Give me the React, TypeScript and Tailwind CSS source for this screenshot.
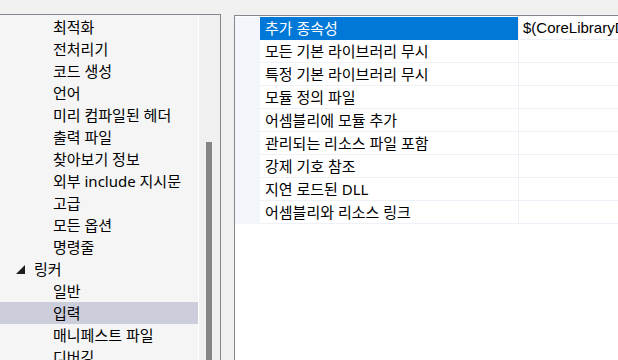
const TREE_ITEMS = [
  { label: "최적화", level: 2 },
  { label: "전처리기", level: 2 },
  { label: "코드 생성", level: 2 },
  { label: "언어", level: 2 },
  { label: "미리 컴파일된 헤더", level: 2 },
  { label: "출력 파일", level: 2 },
  { label: "찾아보기 정보", level: 2 },
  { label: "외부 include 지시문", level: 2 },
  { label: "고급", level: 2 },
  { label: "모든 옵션", level: 2 },
  { label: "명령줄", level: 2 },
  { label: "링커", level: 1 },
  { label: "일반", level: 2 },
  { label: "입력", level: 2, selected: true },
  { label: "매니페스트 파일", level: 2 },
  { label: "디버깅", level: 2 },
];

const PROPS = [
  { name: "추가 종속성", value: "$(CoreLibraryDependencies);%(AdditionalDependencies)" },
  { name: "모든 기본 라이브러리 무시", value: "" },
  { name: "특정 기본 라이브러리 무시", value: "" },
  { name: "모듈 정의 파일", value: "" },
  { name: "어셈블리에 모듈 추가", value: "" },
  { name: "관리되는 리소스 파일 포함", value: "" },
  { name: "강제 기호 참조", value: "" },
  { name: "지연 로드된 DLL", value: "" },
  { name: "어셈블리와 리소스 링크", value: "" },
];

const FONT = { fontFamily: '"Noto Sans", "Noto Sans CJK KR", sans-serif' };

export default function App() {
  return (
    <div
      className="w-[618px] h-[360px] overflow-hidden bg-[#f0f0f0] flex items-start pt-[14px] text-[15px] text-black"
      style={FONT}
    >
      {/* Tree panel */}
      <div className="w-[221px] h-[400px] shrink-0 flex bg-[#f5f5f5] border-t border-r border-[#828790]">
        <div className="w-[198px] pt-[1px]">
          {TREE_ITEMS.map((item) => (
            <div
              key={item.label}
              className={`h-[22px] flex items-center whitespace-nowrap ${item.selected ? "bg-[#cccedb]" : ""} ${item.level === 1 ? "pl-[16px]" : "pl-[53px]"}`}
            >
              {item.level === 1 && (
                <svg width="9" height="9" viewBox="0 0 9 9" className="mr-[9px]">
                  <polygon points="9,0 9,9 0,9" fill="#1e1e1e" />
                </svg>
              )}
              <span className="leading-none">{item.label}</span>
            </div>
          ))}
        </div>
        {/* Scrollbar */}
        <div className="w-[22px] border-l border-white bg-[#f0f0f0] pt-[127px] pl-[7px]">
          <div className="w-[6px] h-[300px] bg-[#858585]" />
        </div>
      </div>

      {/* Property grid */}
      <div className="ml-[13px] mt-[1px] flex-1 h-[400px] bg-white border-t border-l border-[#828790] pt-[1px]">
        {PROPS.map((p, i) => (
          <div key={p.name} className="flex h-[23px]">
            <div className="w-[25px] shrink-0 bg-[#f3f6fb]" />
            <div
              className={`w-[258px] shrink-0 flex items-center pl-[5px] whitespace-nowrap overflow-hidden ${i === 0 ? "bg-[#0078d7] text-white" : "border-b border-[#eef1f7]"}`}
            >
              {p.name}
            </div>
            <div className="w-px shrink-0 bg-[#eef1f7]" />
            <div className="flex-1 min-w-0 flex items-center pl-[4px] whitespace-nowrap overflow-hidden border-b border-[#eef1f7] font-['Liberation_Sans']">
              {p.value}
            </div>
          </div>
        ))}
      </div>
    </div>
  );
}
